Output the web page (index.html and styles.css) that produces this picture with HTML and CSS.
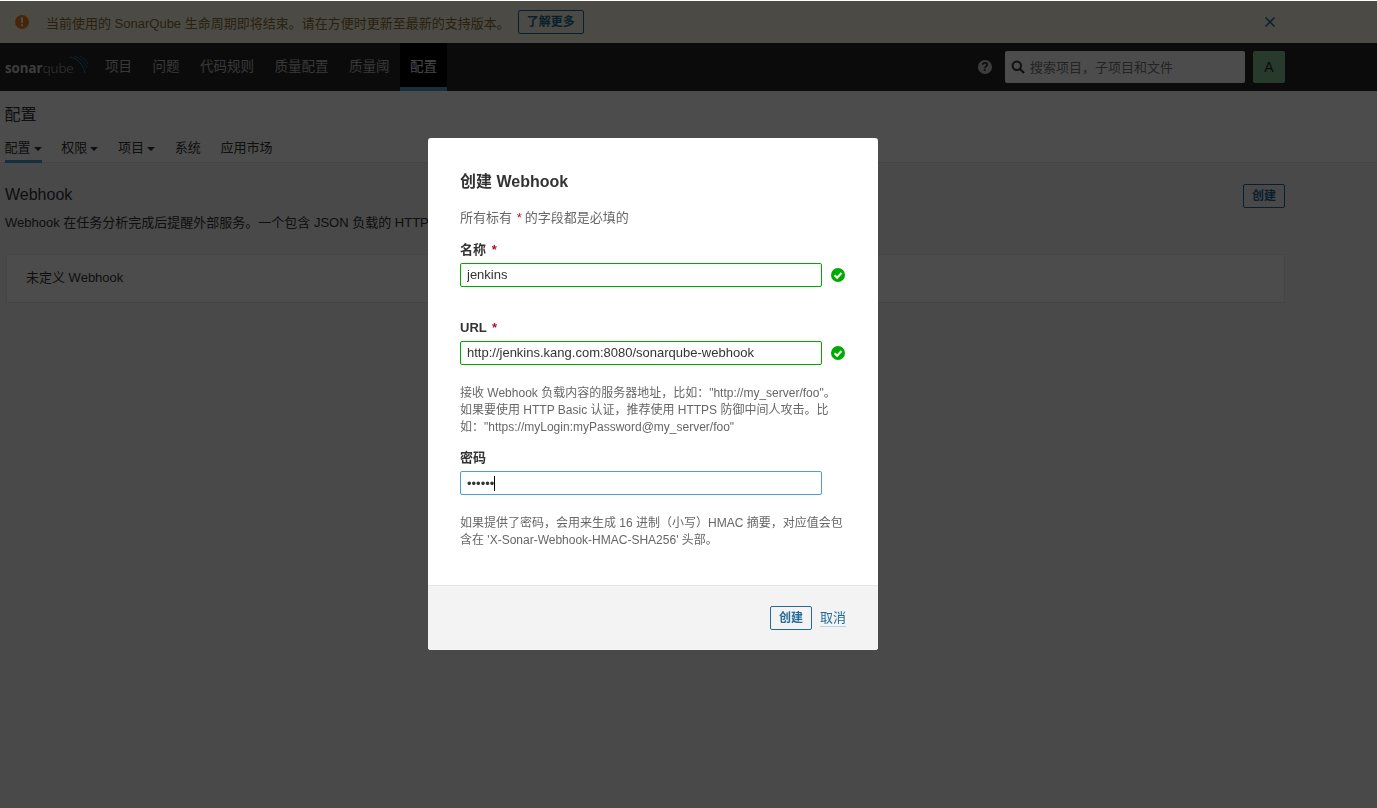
FILE: index.html
```html
<!DOCTYPE html>
<html lang="zh-CN">
<head>
    <meta charset="UTF-8">
    <title>Webhook - SonarQube</title>
    <link rel="stylesheet" href="styles.css">
</head>
<body>

    <!-- Aviso de ciclo de vida -->
    <div class="banner">
        <svg class="banner-icon" viewBox="0 0 14 14" width="14" height="14">
            <circle cx="7" cy="7" r="7" fill="#ed7d20"/>
            <rect x="6" y="2.5" width="2" height="5.5" fill="#fff"/>
            <rect x="6" y="9.2" width="2" height="2" fill="#fff"/>
        </svg>
        <span class="banner-text">当前使用的 SonarQube 生命周期即将结束。请在方便时更新至最新的支持版本。</span>
        <a class="btn banner-btn">了解更多</a>
        <svg class="banner-close" viewBox="0 0 12 12" width="12" height="12">
            <path d="M1.5 1.5l9 9M10.5 1.5l-9 9" stroke="#236a97" stroke-width="1.5" fill="none"/>
        </svg>
    </div>

    <!-- Menu principal -->
    <header class="navbar">
        <div class="logo">
            <span class="logo-text"><b>sonar</b>qube</span>
            <svg class="logo-arcs" viewBox="0 0 20 22" width="20" height="22">
                <path d="M1 2c7 1 13 7 15 16" stroke="#4b9fd5" stroke-width="1" fill="none"/>
                <path d="M5 1c6 1.500 11 6 13 12" stroke="#4b9fd5" stroke-width="0.8" fill="none"/>
                <path d="M11 1c3 1.500 6 4 8 8" stroke="#4b9fd5" stroke-width="0.8" fill="none"/>
            </svg>
        </div>
        <nav class="main-menu">
            <a>项目</a>
            <a>问题</a>
            <a>代码规则</a>
            <a>质量配置</a>
            <a>质量阈</a>
            <a class="active">配置</a>
        </nav>
        <div class="nav-right">
            <span class="help-icon">?</span>
            <div class="search">
                <svg viewBox="0 0 14 14" width="14" height="14">
                    <circle cx="5.800" cy="5.800" r="4.200" stroke="#333" stroke-width="2" fill="none"/>
                    <path d="M9 9l4 4" stroke="#333" stroke-width="2.200" fill="none"/>
                </svg>
                <span>搜索项目，子项目和文件</span>
            </div>
            <div class="avatar">A</div>
        </div>
    </header>

    <!-- Titulo e abas -->
    <div class="context">
        <h1>配置</h1>
        <div class="tabs">
            <a class="active">配置<i class="caret"></i></a>
            <a>权限<i class="caret"></i></a>
            <a>项目<i class="caret"></i></a>
            <a>系统</a>
            <a>应用市场</a>
        </div>
    </div>

    <!-- Conteudo da pagina -->
    <main class="content">
        <div class="content-head">
            <h2>Webhook</h2>
            <a class="btn">创建</a>
        </div>
        <p class="content-desc">Webhook 在任务分析完成后提醒外部服务。一个包含 JSON 负载的 HTTP</p>
        <div class="empty-box">未定义 Webhook</div>
    </main>

    <div class="overlay"></div>

    <!-- Modal -->
    <div class="modal">
        <div class="modal-body">
            <h2>创建 Webhook</h2>
            <p class="required-note">所有标有 <em>*</em>的字段都是必填的</p>

            <label class="field-label">名称 <em>*</em></label>
            <div class="field first">
                <input class="input valid" type="text" value="jenkins">
                <svg class="check" viewBox="0 0 14 14" width="14" height="14">
                    <circle cx="7" cy="7" r="7" fill="#00aa00"/>
                    <path d="M3.600 7.200l2.500 2.500 4.400-4.700" stroke="#fff" stroke-width="2" fill="none"/>
                </svg>
            </div>

            <label class="field-label">URL <em>*</em></label>
            <div class="field">
                <input class="input valid" type="text" value="http://jenkins.kang.com:8080/sonarqube-webhook">
                <svg class="check" viewBox="0 0 14 14" width="14" height="14">
                    <circle cx="7" cy="7" r="7" fill="#00aa00"/>
                    <path d="M3.600 7.200l2.500 2.500 4.400-4.700" stroke="#fff" stroke-width="2" fill="none"/>
                </svg>
            </div>
            <p class="hint">接收 Webhook 负载内容的服务器地址，比如："http://my_server/foo"。如果要使用 HTTP Basic 认证，推荐使用 HTTPS 防御中间人攻击。比如："https://myLogin:myPassword@my_server/foo"</p>

            <label class="field-label">密码</label>
            <div class="field">
                <input class="input focused" type="password" value="secret">
                <i class="text-caret"></i>
            </div>
            <p class="hint">如果提供了密码，会用来生成 16 进制（小写）HMAC 摘要，对应值会包含在 'X-Sonar-Webhook-HMAC-SHA256' 头部。</p>
        </div>
        <div class="modal-foot">
            <a class="btn">创建</a>
            <a class="link">取消</a>
        </div>
    </div>

</body>
</html>
```

FILE: styles.css
```css
/* Geral */
body {
    margin: 0;
    padding-top: 1px;
    height: 807px;
    overflow: hidden;
    background: #fff;
    font-family: "Liberation Sans", "Noto Sans CJK SC", sans-serif;
    font-size: 13px;
    color: #333;
}

h1, h2, p {
    margin: 0;
    font-weight: normal;
}

/* Botao padrao */
.btn {
    display: inline-block;
    box-sizing: border-box;
    height: 24px;
    line-height: 22px;
    padding: 0 8px;
    border: 1px solid #236a97;
    border-radius: 2px;
    background: transparent;
    color: #236a97;
    font-size: 12px;
    font-weight: bold;
}

/* Aviso */
.banner {
    display: flex;
    align-items: center;
    height: 42px;
    padding: 0 101px 0 15px;
    background: #fcf8e3;
    color: #8a6d3b;
}

.banner-icon {
    margin-right: 17px;
}

.banner-text {
    margin-right: 8px;
}

.banner-close {
    margin-left: auto;
}

/* Menu principal */
.navbar {
    display: flex;
    height: 48px;
    background: #262626;
    padding: 0 92px 0 5px;
}

.logo {
    display: flex;
    width: 89.75px;
    position: relative;
}

.logo-text {
    font-family: "Open Sans", sans-serif;
    font-size: 13.3px;
    line-height: 48px;
    font-weight: 300;
    color: #bbb;
    margin-top: 1px;
}

.logo-text b {
    font-weight: 700;
    color: #ccc;
}

.logo-arcs {
    position: absolute;
    left: 64px;
    top: 12px;
    opacity: 0.7;
}

.main-menu {
    display: flex;
}

.main-menu a {
    box-sizing: border-box;
    height: 48px;
    padding: 0 10.25px;
    line-height: 48px;
    font-size: 13.5px;
    color: #bbb;
}

.main-menu a.active {
    background: #000;
    border-bottom: 4px solid #4b9fd5;
    color: #eee;
}

.nav-right {
    display: flex;
    align-items: center;
    margin-left: auto;
}

.help-icon {
    width: 14px;
    height: 14px;
    line-height: 14px;
    margin-right: 13px;
    border-radius: 50%;
    background: #ccc;
    color: #262626;
    font-size: 12px;
    font-weight: bold;
    text-align: center;
}

.search {
    display: flex;
    align-items: center;
    gap: 5px;
    box-sizing: border-box;
    width: 240px;
    height: 32px;
    padding-left: 6px;
    background: #fff;
    border-radius: 2px;
    font-size: 13px;
    color: #777;
}

.search span {
    margin-bottom: 2px;
}

.avatar {
    width: 32px;
    height: 32px;
    line-height: 32px;
    margin-left: 8px;
    border-radius: 2px;
    background: #86c291;
    color: #222;
    font-size: 14px;
    text-align: center;
}

/* Titulo e abas */
.context {
    height: 72px;
    padding: 0 4.5px;
    background: #fff;
    border-bottom: 1px solid #e6e6e6;
    box-sizing: border-box;
}

.context h1 {
    padding-top: 12px;
    font-size: 16px;
    line-height: 24px;
    color: #333;
}

.tabs {
    display: flex;
    gap: 19.75px;
    margin-top: 9px;
}

.tabs a {
    height: 27px;
    line-height: 24px;
    box-sizing: border-box;
    color: #333;
}

.tabs a.active {
    border-bottom: 3px solid #4b9fd5;
}

.caret {
    display: inline-block;
    margin-left: 3px;
    vertical-align: middle;
    border-top: 4px solid #333;
    border-left: 4px solid transparent;
    border-right: 4px solid transparent;
}

/* Conteudo */
.content {
    height: 645px;
    padding: 0 92px 0 5px;
    background: #f3f3f3;
}

.content-head {
    display: flex;
    justify-content: space-between;
    padding-top: 21px;
}

.content-head h2 {
    font-size: 16px;
    line-height: 22px;
}

.content-desc {
    margin-top: 5px;
    line-height: 20px;
}

.empty-box {
    box-sizing: border-box;
    height: 49px;
    line-height: 45px;
    margin: 21px 0 0 1px;
    padding-left: 19px;
    background: #fff;
    border: 1px solid #e6e6e6;
}

/* Modal */
.overlay {
    position: fixed;
    left: 0;
    right: 0;
    top: 1px;
    bottom: 0;
    background: rgba(0, 0, 0, 0.7);
}

.modal {
    position: fixed;
    left: 428px;
    top: 138px;
    width: 450px;
    background: #fff;
    border-radius: 3px;
    overflow: hidden;
}

.modal-body {
    padding: 32px 32px 36px;
}

.modal-body h2 {
    font-size: 16px;
    line-height: 24px;
    font-weight: bold;
    color: #333;
}

.modal-body em {
    font-style: normal;
    color: #b01030;
}

.required-note {
    margin-top: 14px;
    line-height: 20px;
    color: #666;
}

.required-note em {
    margin: 0 3px 0 1px;
}

.field-label {
    display: block;
    margin-top: 12px;
    margin-bottom: 3px;
    line-height: 20px;
    font-weight: bold;
}

.field-label em {
    margin-left: 2px;
}

.field {
    display: flex;
    align-items: center;
    position: relative;
}

.field.first {
    margin-bottom: 31px;
}

.field.first + .field-label {
    margin-top: 0;
}

.input {
    box-sizing: border-box;
    width: 362px;
    height: 24px;
    padding: 0 6px 2px;
    border: 1px solid #cdcdcd;
    border-radius: 2px;
    outline: none;
    font-family: inherit;
    font-size: 13px;
    color: #333;
}

.input.valid {
    border-color: #00aa00;
}

.input.focused {
    border-color: #4b9fd5;
    padding-bottom: 0;
}

.check {
    margin-left: 9px;
}

.text-caret {
    position: absolute;
    left: 34px;
    top: 5px;
    width: 1px;
    height: 15px;
    background: #000;
}

.hint {
    margin-top: 20px;
    font-size: 12px;
    line-height: 17px;
    color: #666;
}

.modal-foot {
    display: flex;
    justify-content: flex-end;
    align-items: center;
    gap: 8px;
    box-sizing: border-box;
    height: 65px;
    padding: 0 32px;
    background: #f3f3f3;
    border-top: 1px solid #e6e6e6;
}

.link {
    color: #236a97;
    border-bottom: 1px solid #b5d5ea;
    line-height: 16px;
}
```
